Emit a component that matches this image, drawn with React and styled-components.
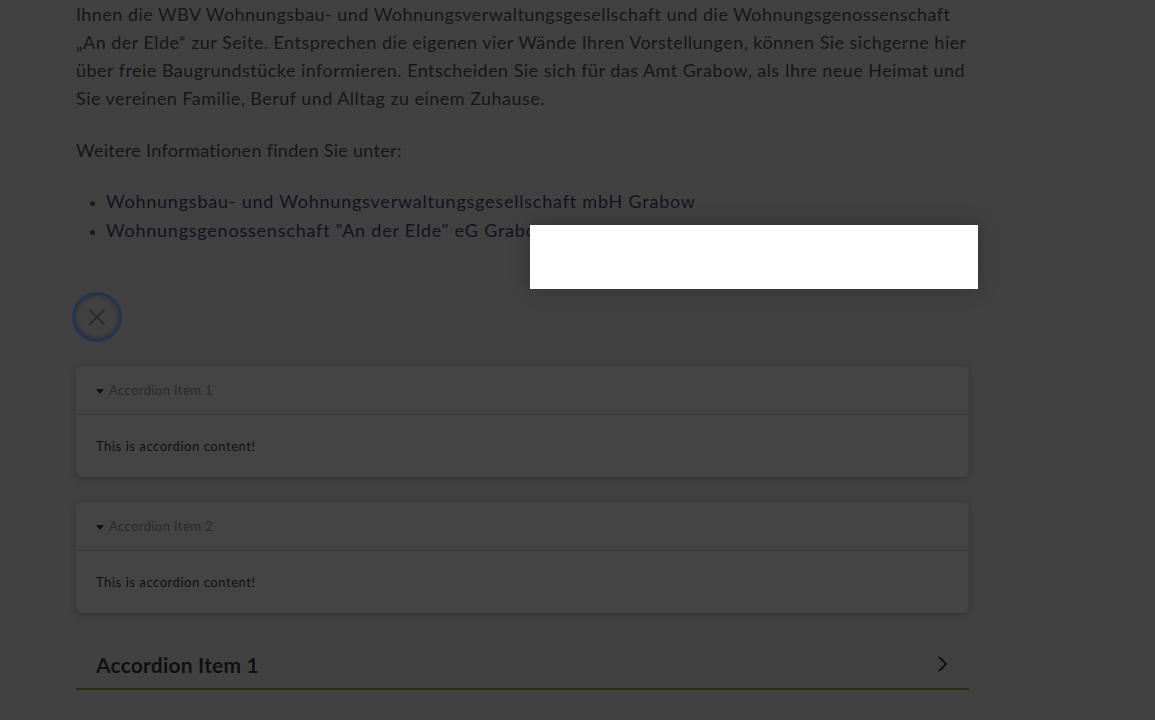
import styled, { createGlobalStyle } from "styled-components";

const Global = createGlobalStyle`
  html, body { margin: 0; padding: 0; }
  body {
    background: #414141;
    font-family: "Lato", "Noto Sans", sans-serif;
    color: #171717;
  }
`;

const Main = styled.main`
  width: 893px;
  padding-left: 76px;
  display: flex;
  flex-direction: column;
`;

const Text = styled.p`
  margin: 0 0 ${(p) => p.$gap || 24}px;
  font-size: 18px;
  line-height: 28px;
  letter-spacing: ${(p) => p.$spacing || 0.46}px;
  white-space: nowrap;
`;

const LinkList = styled.ul`
  margin: 1px 0 0;
  padding-left: 30px;
  li {
    font-size: 18px;
    line-height: 29px;
    letter-spacing: 0.78px;
    color: #131321;
  }
  li::marker { color: #1a1a1a; font-size: 14px; }
`;

const CloseBtn = styled.button`
  margin: 47px 0 24px -4px;
  width: 50px;
  height: 50px;
  border-radius: 50%;
  border: 3px solid #26344f;
  background: #414141;
  box-shadow: inset 0 0 4px rgba(0, 0, 0, 0.35);
  display: flex;
  align-items: center;
  justify-content: center;
  padding: 0;
  color: #262626;
`;

const Card = styled.section`
  background: #444444;
  border-radius: 6px;
  box-shadow: 0 2px 7px rgba(0, 0, 0, 0.22);
  margin-bottom: 25px;
`;

const CardHead = styled.div`
  height: 48px;
  display: flex;
  align-items: center;
  gap: 5px;
  padding-left: 20px;
  border-bottom: 1px solid #383838;
  font-size: 13px;
  letter-spacing: 0.4px;
  color: #2a2a2a;
`;

const Caret = styled.span`
  width: 0;
  height: 0;
  border-left: 4.5px solid transparent;
  border-right: 4.5px solid transparent;
  border-top: 5px solid #111;
  margin-top: 2px;
`;

const CardBody = styled.div`
  height: 62px;
  display: flex;
  align-items: center;
  padding-left: 20px;
  font-size: 13px;
  letter-spacing: 0.55px;
  color: #111;
`;

const BigHead = styled.div`
  height: 48px;
  margin-top: 2px;
  display: flex;
  align-items: center;
  justify-content: space-between;
  padding: 0 20px 0 20px;
  border-bottom: 2.5px solid #2b2b10;
  font-size: 21px;
  font-weight: 700;
  letter-spacing: 0.2px;
  color: #111;
`;

const Modal = styled.div`
  position: fixed;
  left: 530px;
  top: 225px;
  width: 448px;
  height: 64px;
  background: #fff;
  box-shadow: 0 0 18px rgba(0, 0, 0, 0.25);
`;

const items = ["Accordion Item 1", "Accordion Item 2"];

export default function App() {
  return (
    <>
      <Global />
      <Main>
        <Text>
          Ihnen die WBV Wohnungsbau- und Wohnungsverwaltungsgesellschaft und die Wohnungsgenossenschaft<br />
          „An der Elde“ zur Seite. Entsprechen die eigenen vier Wände Ihren Vorstellungen, können Sie sichgerne hier<br />
          über freie Baugrundstücke informieren. Entscheiden Sie sich für das Amt Grabow, als Ihre neue Heimat und<br />
          Sie vereinen Familie, Beruf und Alltag zu einem Zuhause.
        </Text>
        <Text $gap={22} $spacing={0.3}>Weitere Informationen finden Sie unter:</Text>
        <LinkList>
          <li>Wohnungsbau- und Wohnungsverwaltungsgesellschaft mbH Grabow</li>
          <li>Wohnungsgenossenschaft "An der Elde" eG Grabow</li>
        </LinkList>
        <CloseBtn aria-label="close">
          <svg width="20" height="20" viewBox="0 0 20 20" fill="none" stroke="currentColor" strokeWidth="1.6" strokeLinecap="round">
            <path d="M3 3l14 14M17 3L3 17" />
          </svg>
        </CloseBtn>
        {items.map((t) => (
          <Card key={t}>
            <CardHead>
              <Caret />
              {t}
            </CardHead>
            <CardBody>This is accordion content!</CardBody>
          </Card>
        ))}
        <BigHead>
          Accordion Item 1
          <svg width="12" height="18" viewBox="0 0 12 18" fill="none" stroke="#111" strokeWidth="1.8">
            <path d="M2 2l7 7-7 7" />
          </svg>
        </BigHead>
      </Main>
      <Modal />
    </>
  );
}
